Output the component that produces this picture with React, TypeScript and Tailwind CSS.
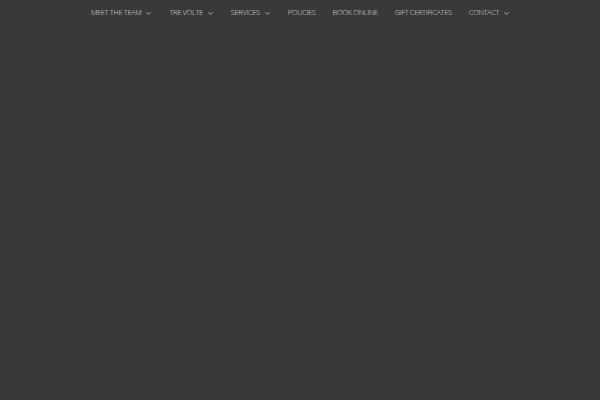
import { ChevronDown } from 'lucide-react';

const items = [
  { label: 'Meet the Team', sub: true },
  { label: 'Tre Volte', sub: true },
  { label: 'Services', sub: true },
  { label: 'Policies', sub: false },
  { label: 'Book Online', sub: false },
  { label: 'Gift Certificates', sub: false },
  { label: 'Contact', sub: true },
];

export default function App() {
  return (
    <div className="w-[600px] h-[400px] bg-[#393939] font-['Open_Sans',sans-serif]">
      <nav className="flex justify-center items-center h-[26px] pl-[1px] gap-[17px]">
        {items.map((item) => (
          <a
            key={item.label}
            href="#"
            className="flex items-center gap-[4px] text-[7.5px] font-light uppercase text-[#dcdcdc] tracking-[-0.35px]"
          >
            {item.label}
            {item.sub && <ChevronDown className="w-[7px] h-[7px]" strokeWidth={2.5} />}
          </a>
        ))}
      </nav>
    </div>
  );
}
